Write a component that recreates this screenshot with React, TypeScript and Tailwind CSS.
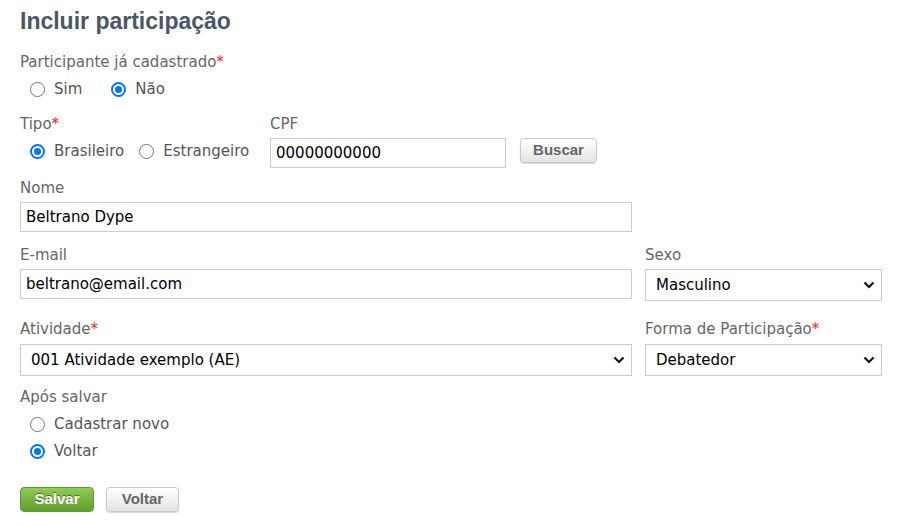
import React from "react";

const font = { fontFamily: '"DejaVu Sans", Verdana, sans-serif' };
const arial = { fontFamily: '"Liberation Sans", Arial, sans-serif' };

function Radio({ checked, label }: { checked?: boolean; label: string }) {
  return (
    <label className="flex items-center gap-[9px] text-[15px] leading-[18px] text-[#555]">
      <span
        className={
          checked
            ? "flex size-[15px] items-center justify-center rounded-full border-2 border-[#0075ff] bg-white"
            : "size-[15px] rounded-full border border-[#767676] bg-white"
        }
      >
        {checked && <span className="size-[7px] rounded-full bg-[#0075ff]" />}
      </span>
      {label}
    </label>
  );
}

function Label({ children, req }: { children: React.ReactNode; req?: boolean }) {
  return (
    <div className="text-[15px] leading-[18px] text-[#666]">
      {children}
      {req && <span className="text-[#ff2020]">*</span>}
    </div>
  );
}

function Input({ value, className }: { value: string; className?: string }) {
  return (
    <div
      className={
        "flex h-[30px] items-center border border-[#ccc] bg-white px-[5px] text-[15px] text-black " +
        (className ?? "")
      }
    >
      {value}
    </div>
  );
}

function Select({ value, className }: { value: string; className?: string }) {
  return (
    <div
      className={
        "flex h-[32px] items-center justify-between border border-[#ccc] bg-white pl-[10px] pr-[6px] text-[15px] text-black " +
        (className ?? "")
      }
    >
      <span>{value}</span>
      <svg width="12" height="8" viewBox="0 0 12 8">
        <path d="M1.5 1.5 6 6l4.5-4.5" fill="none" stroke="#111" strokeWidth="2.2" />
      </svg>
    </div>
  );
}

const grayBtn =
  "h-[25px] rounded-[4px] border border-[#c8c8c8] bg-gradient-to-b from-white to-[#e4e4e4] text-[15px] font-bold text-[#666] shadow-[0_1px_1px_rgba(0,0,0,0.15)]";

export default function App() {
  return (
    <div className="min-h-[526px] bg-white px-5 pt-[7px]" style={font}>
      <h1 className="text-[23px] font-bold leading-[28px] text-[#4a5866]" style={arial}>
        Incluir participação
      </h1>

      <div className="mt-[18px]">
        <Label req>Participante já cadastrado</Label>
        <div className="mt-[9px] flex gap-[29px] pl-[10px]">
          <Radio label="Sim" />
          <Radio checked label="Não" />
        </div>
      </div>

      <div className="mt-[17px] flex">
        <div className="w-[250px]">
          <Label req>Tipo</Label>
          <div className="mt-[9px] flex gap-[15px] pl-[10px]">
            <Radio checked label="Brasileiro" />
            <Radio label="Estrangeiro" />
          </div>
        </div>
        <div>
          <Label>CPF</Label>
          <div className="mt-[5px] flex items-start gap-[14px]">
            <Input value="00000000000" className="w-[236px]" />
            <button className={grayBtn + " w-[77px]"} style={arial}>
              Buscar
            </button>
          </div>
        </div>
      </div>

      <div className="mt-[11px]">
        <Label>Nome</Label>
        <Input value="Beltrano Dype" className="mt-[5px] w-[612px]" />
      </div>

      <div className="mt-[14px] flex gap-[13px]">
        <div>
          <Label>E-mail</Label>
          <Input value="beltrano@email.com" className="mt-[5px] w-[612px]" />
        </div>
        <div>
          <Label>Sexo</Label>
          <Select value="Masculino" className="mt-[5px] w-[237px]" />
        </div>
      </div>

      <div className="mt-[19px] flex gap-[13px]">
        <div>
          <Label req>Atividade</Label>
          <Select value="001 Atividade exemplo (AE)" className="mt-[6px] w-[612px]" />
        </div>
        <div>
          <Label req>Forma de Participação</Label>
          <Select value="Debatedor" className="mt-[6px] w-[237px]" />
        </div>
      </div>

      <div className="mt-[12px]">
        <Label>Após salvar</Label>
        <div className="mt-[9px] flex flex-col gap-[9px] pl-[10px]">
          <Radio label="Cadastrar novo" />
          <Radio checked label="Voltar" />
        </div>
      </div>

      <div className="mt-[27px] flex gap-[12px]" style={arial}>
        <button className="h-[25px] w-[74px] rounded-[4px] border border-[#5e9a2c] bg-gradient-to-b from-[#8fcb55] to-[#5f9e2b] text-[15px] font-bold text-white [text-shadow:0_-1px_0_rgba(0,0,0,0.45)]">
          Salvar
        </button>
        <button className={grayBtn + " w-[73px]"}>Voltar</button>
      </div>
    </div>
  );
}
